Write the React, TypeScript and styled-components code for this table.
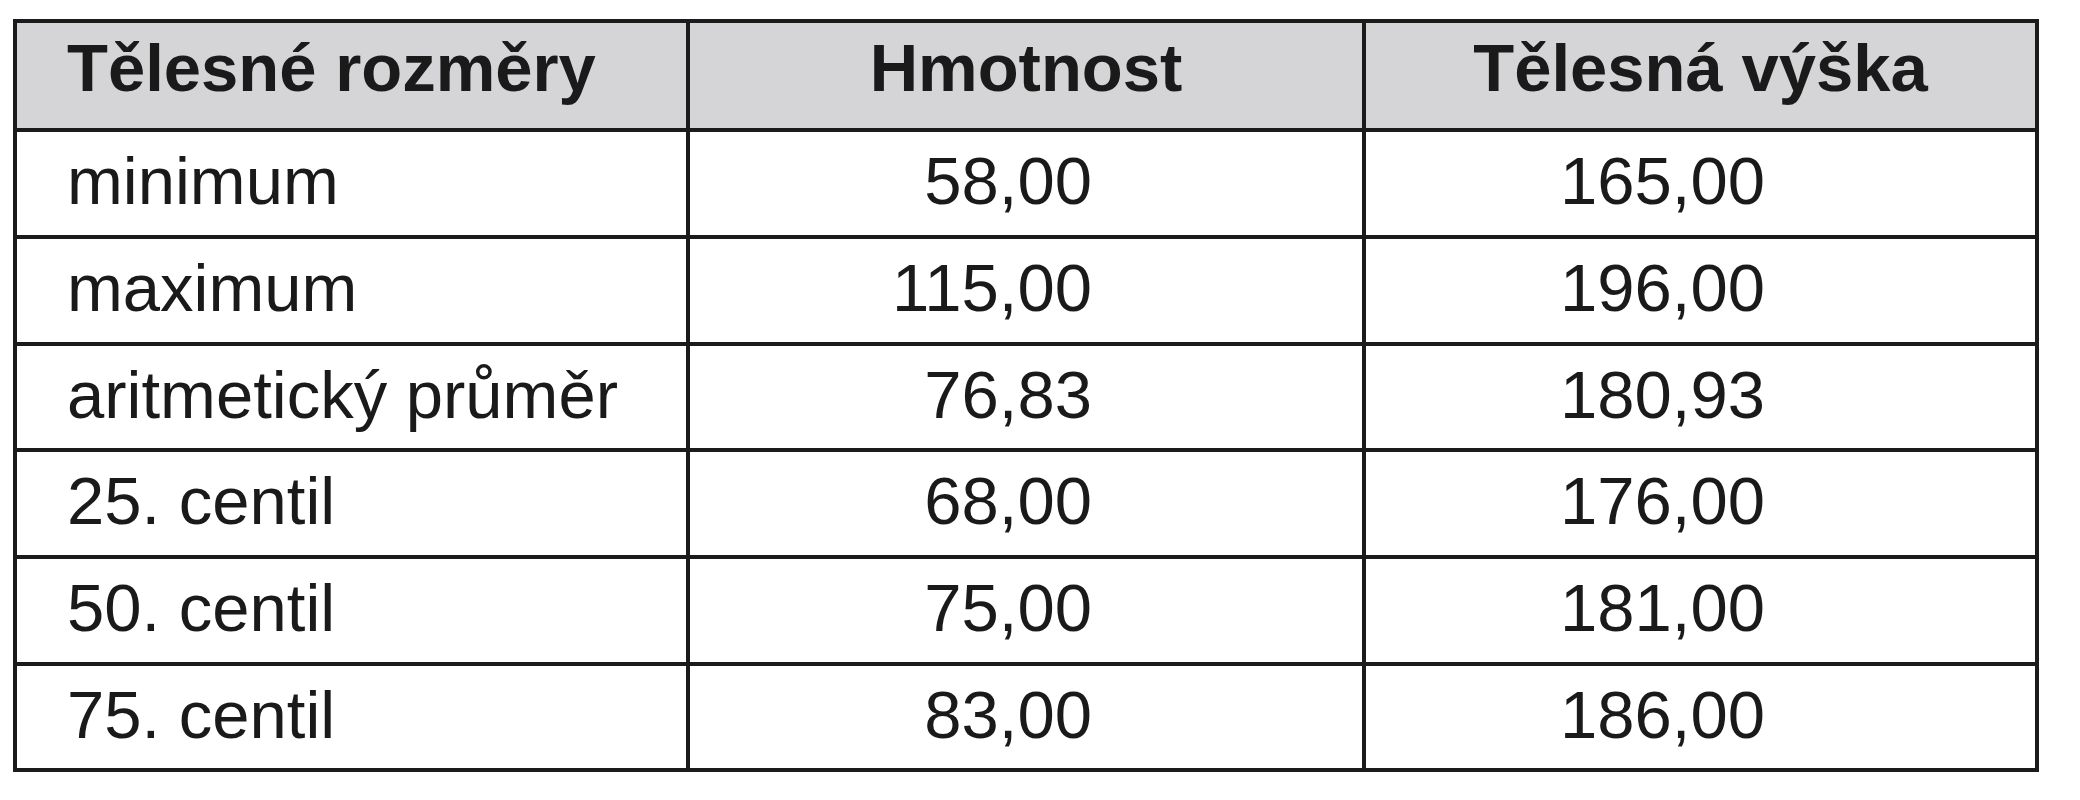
import styled, { createGlobalStyle } from "styled-components";

const GlobalStyle = createGlobalStyle`
  html, body {
    margin: 0;
    padding: 0;
    background: #ffffff;
  }
  body {
    font-family: "Liberation Sans", Arial, Helvetica, sans-serif;
  }
`;

type Row = {
  label: string;
  weight: string;
  height: string;
  rowHeight: number;
};

const rows: Row[] = [
  { label: "minimum", weight: "58,00", height: "165,00", rowHeight: 107 },
  { label: "maximum", weight: "115,00", height: "196,00", rowHeight: 107 },
  { label: "aritmetický průměr", weight: "76,83", height: "180,93", rowHeight: 106 },
  { label: "25. centil", weight: "68,00", height: "176,00", rowHeight: 107 },
  { label: "50. centil", weight: "75,00", height: "181,00", rowHeight: 107 },
  { label: "75. centil", weight: "83,00", height: "186,00", rowHeight: 106 },
];

const Page = styled.div`
  padding: 19px 0 0 13px;
`;

const Table = styled.table`
  border-collapse: separate;
  border-spacing: 0;
  table-layout: fixed;
  width: 2026px;
  border-left: 4px solid #1b1b1b;
  border-top: 4px solid #1b1b1b;
  color: #1a1a1a;
`;

const HeadRow = styled.tr`
  height: 109px;
  background: #d5d5d7;
`;

const BodyRow = styled.tr<{ $h: number }>`
  height: ${(p) => p.$h}px;
`;

const HeadCell = styled.th<{ $align?: "left" | "center" }>`
  border-right: 4px solid #1b1b1b;
  border-bottom: 4px solid #1b1b1b;
  padding: 0 0 16px ${(p) => (p.$align === "left" ? "50px" : "0")};
  text-align: ${(p) => p.$align ?? "center"};
  vertical-align: middle;
  font-size: 67px;
  font-weight: 700;
  white-space: nowrap;
`;

const Cell = styled.td<{ $num?: boolean }>`
  border-right: 4px solid #1b1b1b;
  border-bottom: 4px solid #1b1b1b;
  padding: ${(p) => (p.$num ? "0 270px 6px 0" : "0 0 6px 50px")};
  text-align: ${(p) => (p.$num ? "right" : "left")};
  vertical-align: middle;
  font-size: 67px;
  font-weight: 400;
  white-space: nowrap;
`;

export default function App() {
  return (
    <Page>
      <GlobalStyle />
      <Table>
        <colgroup>
          <col style={{ width: 673 }} />
          <col style={{ width: 676 }} />
          <col style={{ width: 673 }} />
        </colgroup>
        <thead>
          <HeadRow>
            <HeadCell $align="left">Tělesné rozměry</HeadCell>
            <HeadCell>Hmotnost</HeadCell>
            <HeadCell>Tělesná výška</HeadCell>
          </HeadRow>
        </thead>
        <tbody>
          {rows.map((r) => (
            <BodyRow key={r.label} $h={r.rowHeight}>
              <Cell>{r.label}</Cell>
              <Cell $num>{r.weight}</Cell>
              <Cell $num>{r.height}</Cell>
            </BodyRow>
          ))}
        </tbody>
      </Table>
    </Page>
  );
}
